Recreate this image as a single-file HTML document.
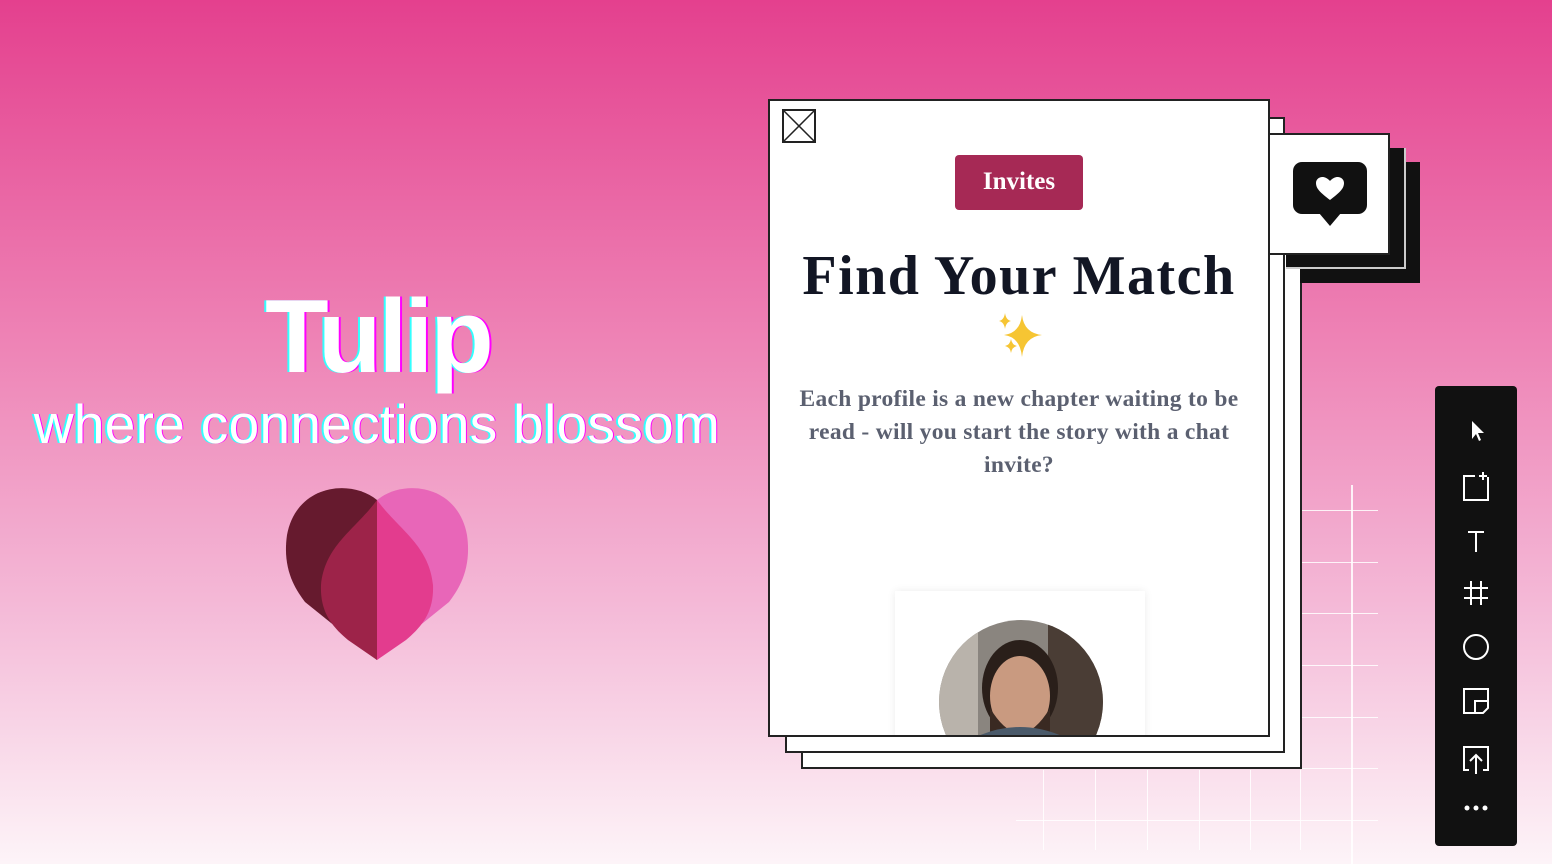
<!DOCTYPE html>
<html><head><meta charset="utf-8"><style>
*{margin:0;padding:0;box-sizing:border-box}
body{width:1552px;height:864px;overflow:hidden;position:relative;font-family:"Liberation Sans",sans-serif;
background:linear-gradient(180deg,#e4408e 0%,#ee84b6 40%,#f4b9d7 70%,#fdf4f8 100%);}
.abs{position:absolute}
.card{position:absolute;background:#fff;border:2px solid #222}
.gl{position:absolute;background:rgba(255,255,255,.85)}
.tb svg{position:absolute;left:50%;transform:translate(-50%,-50%)}
</style></head><body>
<div class="gl" style="left:1351px;top:485px;width:2px;height:379px"></div>
<div class="gl" style="left:1300px;top:510px;width:78px;height:1px"></div>
<div class="gl" style="left:1300px;top:562px;width:78px;height:1px"></div>
<div class="gl" style="left:1300px;top:613px;width:78px;height:1px"></div>
<div class="gl" style="left:1300px;top:665px;width:78px;height:1px"></div>
<div class="gl" style="left:1300px;top:717px;width:78px;height:1px"></div>
<div class="gl" style="left:1300px;top:768px;width:78px;height:1px"></div>
<div class="gl" style="left:1016px;top:820px;width:362px;height:1px"></div>
<div class="gl" style="left:1043px;top:770px;width:1px;height:80px"></div>
<div class="gl" style="left:1095px;top:770px;width:1px;height:80px"></div>
<div class="gl" style="left:1147px;top:770px;width:1px;height:80px"></div>
<div class="gl" style="left:1199px;top:770px;width:1px;height:80px"></div>
<div class="gl" style="left:1250px;top:770px;width:1px;height:80px"></div>
<div class="gl" style="left:1300px;top:770px;width:1px;height:80px"></div>

<div class="abs" style="left:0;width:756px;top:278px;text-align:center;color:#fff;font-weight:bold;font-size:104px;letter-spacing:-3px;text-shadow:-2px 0 #3ff,2px 0 #f0f">Tulip</div>
<div class="abs" style="left:0;width:754px;top:392px;text-align:center;color:#fff;font-size:55px;letter-spacing:0.3px;text-shadow:-2px 0 #3ff,1px 0 #f0f">where connections blossom</div>
<svg class="abs" style="left:280px;top:485px" width="195" height="180" viewBox="280 485 195 180">
<path d="M377 500 C350 478 296 485 287 535 C282 570 296 590 305 602 L377 660 Z" fill="#661a2e"/>
<path d="M377 500 C404 478 458 485 467 535 C472 570 458 590 449 602 L377 660 Z" fill="#e866b8"/>
<path d="M377 500 C355 530 325 545 321 585 C320 610 330 625 348 640 L377 660 Z" fill="#9d2349"/>
<path d="M377 500 C399 530 429 545 433 585 C434 610 424 625 406 640 L377 660 Z" fill="#e33c8e"/>
</svg>

<div class="card" style="left:801px;top:133px;width:501px;height:636px"></div>
<div class="card" style="left:785px;top:117px;width:500px;height:636px"></div>
<div class="abs" style="left:1300px;top:162px;width:120px;height:121px;background:#111"></div>
<div class="abs" style="left:1286px;top:148px;width:120px;height:121px;background:#111;border-right:2px solid #ccc;border-bottom:2px solid #ccc"></div>
<div class="card" style="left:1268px;top:133px;width:122px;height:122px;border-left:none"></div>
<svg class="abs" style="left:1293px;top:162px" width="74" height="66" viewBox="0 0 74 66">
<rect x="0" y="0" width="74" height="52" rx="9" fill="#111"/><path d="M26 51 L37 64 L48 51Z" fill="#111"/>
<path d="M37 38 C28 31 23 27 23 21 C23 15 31 12 37 19 C43 12 51 15 51 21 C51 27 46 31 37 38Z" fill="#fff"/>
</svg>

<div class="card" style="left:768px;top:99px;width:502px;height:638px;overflow:hidden">
 <svg class="abs" style="left:12px;top:8px" width="34" height="34"><rect x="1" y="1" width="32" height="32" fill="#fff" stroke="#222" stroke-width="2"/><path d="M1 1L33 33M33 1L1 33" stroke="#222" stroke-width="1.5"/></svg>
 <div class="abs" style="left:185px;top:54px;width:128px;height:55px;background:#a62955;border-radius:4px;color:#fff;font-family:'Liberation Serif',serif;font-weight:bold;font-size:25px;text-align:center;line-height:53px">Invites</div>
 <div class="abs" style="left:0;width:498px;top:143px;text-align:center;font-family:'Liberation Serif',serif;font-weight:bold;font-size:56px;letter-spacing:1.5px;color:#121624;white-space:nowrap">Find Your Match</div>
 <svg class="abs" style="left:226px;top:210px" width="50" height="48" viewBox="0 0 50 48">
  <path d="M26 4 Q28 22 46 24 Q28 26 26 46 Q24 26 8 24 Q24 22 26 4Z" fill="#f6c533"/>
  <path d="M9 2 Q10 9 15 10 Q10 11 9 18 Q8 11 3 10 Q8 9 9 2Z" fill="#f6c533"/>
  <path d="M15 28 Q16 34 21 35 Q16 36 15 42 Q14 36 9 35 Q14 34 15 28Z" fill="#f6c533"/>
 </svg>
 <div class="abs" style="left:12px;width:474px;top:282px;text-align:center;font-family:'Liberation Serif',serif;font-weight:bold;font-size:23.5px;letter-spacing:0.3px;line-height:33px;color:#5b6070">Each profile is a new chapter waiting to be read - will you start the story with a chat invite?</div>
 <div class="abs" style="left:125px;top:490px;width:250px;height:160px;background:#fff;box-shadow:0 0 8px rgba(0,0,0,.08)"></div>
 <svg class="abs" style="left:168px;top:517px" width="166" height="120" viewBox="0 0 166 120">
  <defs><clipPath id="c"><circle cx="83" cy="84" r="82"/></clipPath></defs>
  <g clip-path="url(#c)">
   <rect width="166" height="170" fill="#8a857f"/>
   <rect x="110" width="56" height="170" fill="#4a3d35"/>
   <rect x="0" width="40" height="170" fill="#b9b3ab"/>
   <ellipse cx="82" cy="70" rx="38" ry="48" fill="#2a1f1a"/>
   <ellipse cx="82" cy="78" rx="30" ry="40" fill="#c99a80"/>
   <path d="M52 90 Q82 140 112 90 L112 120 L52 120Z" fill="#3a2a22"/>
   <path d="M40 118 Q82 100 124 118 L130 170 L36 170Z" fill="#4a5a6a"/>
  </g>
 </svg>
</div>

<div class="abs tb" style="left:1435px;top:386px;width:82px;height:460px;background:#111;border-radius:4px">
 <svg style="top:45px" width="24" height="24" viewBox="0 0 24 24"><path d="M8 2 L8 20 L12 15 L15 22 L17 21 L14 14 L20 14Z" fill="#fff"/></svg>
 <svg style="top:100px" width="30" height="32" viewBox="0 0 30 32"><path d="M14 6 H3 V30 H27 V7" fill="none" stroke="#fff" stroke-width="2"/><path d="M22 2V10M18 6H26" stroke="#fff" stroke-width="2"/></svg>
 <svg style="top:155px" width="24" height="24" viewBox="0 0 24 24"><path d="M4 3H20M12 3V23" stroke="#fff" stroke-width="2"/></svg>
 <svg style="top:207px" width="28" height="28" viewBox="0 0 28 28"><path d="M9 2V26M19 2V26M2 9H26M2 19H26" stroke="#fff" stroke-width="2"/></svg>
 <svg style="top:261px" width="30" height="30" viewBox="0 0 30 30"><circle cx="15" cy="15" r="12" fill="none" stroke="#fff" stroke-width="2"/></svg>
 <svg style="top:315px" width="30" height="30" viewBox="0 0 30 30"><path d="M3 3H27V22L22 27H3Z M14 27V15H27" fill="none" stroke="#fff" stroke-width="2"/></svg>
 <svg style="top:374px" width="30" height="32" viewBox="0 0 30 32"><path d="M8 26H3V3H27V26H22M15 30V11M9 17L15 11L21 17" fill="none" stroke="#fff" stroke-width="2"/></svg>
 <svg style="top:422px" width="28" height="10" viewBox="0 0 28 10"><circle cx="5" cy="5" r="2.5" fill="#fff"/><circle cx="14" cy="5" r="2.5" fill="#fff"/><circle cx="23" cy="5" r="2.5" fill="#fff"/></svg>
</div>
</body></html>
